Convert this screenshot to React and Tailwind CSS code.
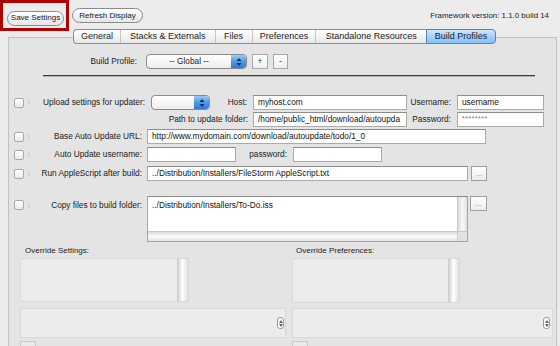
import React from "react";

const Check = () => (
  <div className="w-[10px] h-[10px] rounded-[2px] border border-[#a9a9a9] bg-gradient-to-b from-white to-[#e9e9e9]" />
);

const Gutter = ({ box = true }) => (
  <div className="w-[30px] h-[10px] flex items-center shrink-0">
    {box && (
      <>
        <div className="ml-[5px]">
          <Check />
        </div>
        <span className="ml-[4px] text-[7px] leading-none text-[#b8b8b8]">i</span>
      </>
    )}
  </div>
);

const Field = ({ className, children, muted }) => (
  <div
    className={`h-[15px] shrink-0 border border-[#ababab] border-t-[#8c8c8c] bg-white flex items-center px-[4px] whitespace-nowrap overflow-hidden ${
      muted ? "text-[#777] text-[7px] tracking-[0.5px]" : "text-[#111] text-[8.3px]"
    } ${className}`}
  >
    {children}
  </div>
);

const Dots = ({ className }) => (
  <div
    className={`h-[15px] shrink-0 border border-[#9f9f9f] bg-gradient-to-b from-white to-[#ececec] flex items-center justify-center text-[7px] text-[#777] leading-none ${className}`}
  >
    ...
  </div>
);

const Stepper = () => (
  <div className="w-[15px] h-full rounded-r-[3px] bg-gradient-to-b from-[#9ccbf5] via-[#4f9ae6] to-[#2f7ad4] flex items-center justify-center">
    <svg width="6" height="10" viewBox="0 0 6 10">
      <path d="M3 1 L5.5 4 L0.5 4 Z" fill="#10305a" />
      <path d="M3 9 L5.5 6 L0.5 6 Z" fill="#10305a" />
    </svg>
  </div>
);

const Popup = ({ className, children }) => (
  <div
    className={`h-[15px] shrink-0 rounded-[4px] border border-[#8a8a8a] bg-gradient-to-b from-white to-[#ededed] flex items-stretch overflow-hidden ${className}`}
  >
    <div className="flex-1 flex items-center justify-center text-[8.3px] text-[#222]">{children}</div>
    <Stepper />
  </div>
);

const MiniSpin = () => (
  <div className="w-[7px] h-[12px] rounded-[3px] border border-[#9a9a9a] bg-white flex flex-col items-center justify-center gap-[1px]">
    <svg width="4" height="3" viewBox="0 0 4 3">
      <path d="M2 0 L4 3 L0 3 Z" fill="#666" />
    </svg>
    <svg width="4" height="3" viewBox="0 0 4 3">
      <path d="M2 3 L4 0 L0 0 Z" fill="#666" />
    </svg>
  </div>
);

const tabs = [
  { name: "General", w: "w-[46px]" },
  { name: "Stacks & Externals", w: "w-[95px]" },
  { name: "Files", w: "w-[37px]" },
  { name: "Preferences", w: "w-[64px]" },
  { name: "Standalone Resources", w: "w-[111px]" },
];

export default function App() {
  return (
    <div className="w-[560px] h-[346px] overflow-hidden bg-[#ececec] font-['Liberation_Sans',Arial,sans-serif] text-[#1e1e1e]">
      {/* top bar */}
      <div className="h-[29px] flex items-start">
        <div className="w-[69px] h-[31px] shrink-0 border-[3px] border-[#b00000] relative z-20">
          <button className="ml-[4px] mt-[5px] w-[57px] h-[15px] rounded-full border border-[#8b8b8b] bg-gradient-to-b from-white to-[#e6e6e6] text-[8px] font-medium text-[#1a1a1a] leading-none">
            Save Settings
          </button>
        </div>
        <button className="ml-[3px] mt-[8px] w-[71px] h-[15px] rounded-full border border-[#8b8b8b] bg-gradient-to-b from-white to-[#e6e6e6] text-[8px] font-medium text-[#1a1a1a] leading-none">
          Refresh Display
        </button>
        <div className="ml-auto mr-[11px] mt-[11px] text-[7.9px] leading-[10px] text-[#222]">
          Framework version: 1.1.0 build 14
        </div>
      </div>

      {/* tabs */}
      <div className="relative z-10 ml-[73px] flex h-[15px] w-[423px]">
        <div className="flex h-[15px] border border-[#8e8e8e] border-r-0 rounded-l-[4px] overflow-hidden bg-gradient-to-b from-white to-[#e7e7e7]">
          {tabs.map((t, i) => (
            <div
              key={t.name}
              className={`${t.w} h-full flex items-center justify-center text-[9px] text-[#1e1e1e] leading-none ${
                i > 0 ? "border-l border-[#c4c4c4]" : ""
              }`}
            >
              {t.name}
            </div>
          ))}
        </div>
        <div className="w-[70px] h-[15px] rounded-r-[4px] border border-[#4f84c6] bg-gradient-to-b from-[#d3e8fb] via-[#a6d0f6] to-[#86c0f4] flex items-center justify-center text-[9px] text-[#10233d] leading-none">
          Build Profiles
        </div>
      </div>

      {/* panel */}
      <div className="-mt-[7px] ml-[8px] w-[549px] h-[309px] overflow-hidden border-l border-t border-r border-[#c2c2c2] bg-[#e4e4e4]">
        {/* build profile */}
        <div className="mt-[16px] flex items-center h-[15px]">
          <div className="w-[128px] text-right text-[8.3px] text-[#222]">Build Profile:</div>
          <Popup className="ml-[9px] w-[101px]">-- Global --</Popup>
          <div className="ml-[5px] w-[16px] h-[15px] border border-[#a8a8a8] bg-gradient-to-b from-white to-[#efefef] flex items-center justify-center text-[9px] text-[#444] leading-none">
            +
          </div>
          <div className="ml-[5px] w-[15px] h-[15px] border border-[#a8a8a8] bg-gradient-to-b from-white to-[#efefef] flex items-center justify-center text-[9px] text-[#444] leading-none">
            -
          </div>
        </div>

        <div className="mt-[6px] ml-[34px] w-[492px] h-px bg-[#3a3a3a]" />
        <div className="ml-[34px] w-[492px] h-px bg-[#b4b4b4]" />

        {/* row 1 */}
        <div className="mt-[18px] flex items-center h-[15px] text-[8.3px] text-[#222]">
          <Gutter />
          <div className="w-[106px] text-right">Upload settings for updater:</div>
          <Popup className="ml-[6px] w-[59px]" />
          <div className="w-[37px] text-right">Host:</div>
          <Field className="ml-[6px] w-[154px]">myhost.com</Field>
          <div className="w-[44px] text-right">Username:</div>
          <Field className="ml-[6px] w-[87px]">username</Field>
        </div>

        {/* row 2 */}
        <div className="mt-[2px] flex items-center h-[15px] text-[8.3px] text-[#222]">
          <div className="w-[239px] text-right">Path to update folder:</div>
          <Field className="ml-[5px] w-[154px]">/home/public_html/download/autoupda</Field>
          <div className="w-[44px] text-right">Password:</div>
          <Field className="ml-[6px] w-[87px]" muted>
            ********
          </Field>
        </div>

        {/* row 3 */}
        <div className="mt-[2px] flex items-center h-[15px] text-[8.3px] text-[#222]">
          <Gutter />
          <div className="w-[103px] text-right">Base Auto Update URL:</div>
          <Field className="ml-[5px] w-[339px]">http://www.mydomain.com/download/autoupdate/todo/1_0</Field>
        </div>

        {/* row 4 */}
        <div className="mt-[3px] flex items-center h-[15px] text-[8.3px] text-[#222]">
          <Gutter />
          <div className="w-[103px] text-right">Auto Update username:</div>
          <Field className="ml-[5px] w-[89px]" />
          <div className="w-[51px] text-right">password:</div>
          <Field className="ml-[6px] w-[89px]" />
        </div>

        {/* row 5 */}
        <div className="mt-[4px] flex items-center h-[15px] text-[8.3px] text-[#222]">
          <Gutter />
          <div className="w-[103px] text-right">Run AppleScript after build:</div>
          <Field className="ml-[5px] w-[321px]">../Distribution/Installers/FileStorm AppleScript.txt</Field>
          <Dots className="ml-[3px] w-[16px]" />
        </div>

        {/* row 6 */}
        <div className="mt-[15px] flex items-start h-[46px] text-[8.3px] text-[#222]">
          <div className="mt-[4px]">
            <Gutter />
          </div>
          <div className="mt-[3px] w-[103px] text-right">Copy files to build folder:</div>
          <div className="ml-[5px] w-[321px] h-[46px] flex flex-col border border-[#a5a5a5] border-t-[#8c8c8c]">
            <div className="flex h-[34px]">
              <div className="flex-1 bg-white px-[4px] pt-[3px] text-[#111] leading-[10px]">
                ../Distribution/Installers/To-Do.iss
              </div>
              <div className="w-[10px] bg-gradient-to-r from-[#d9d9d9] via-[#f7f7f7] to-[#e2e2e2] border-l border-[#c8c8c8]" />
            </div>
            <div className="flex h-[10px] border-t border-[#c8c8c8]">
              <div className="flex-1 bg-gradient-to-b from-[#dcdcdc] via-[#fafafa] to-[#e4e4e4]" />
              <div className="w-[10px] bg-[#e2e2e2] border-l border-[#cfcfcf]" />
            </div>
          </div>
          <Dots className="ml-[2px] w-[17px]" />
        </div>

        {/* override labels */}
        <div className="mt-[4px] flex h-[10px] items-center text-[8px] text-[#222] leading-none">
          <div className="ml-[16px] w-[271px]">Override Settings:</div>
          <div>Override Preferences:</div>
        </div>

        {/* override boxes */}
        <div className="mt-[2px] flex h-[44px]">
          <div className="ml-[11px] w-[169px] h-[44px] flex border border-[#d8d8d8] bg-[#ebebeb]">
            <div className="flex-1" />
            <div className="w-[11px] bg-gradient-to-r from-[#c9c9c9] via-white to-[#dedede]" />
          </div>
          <div className="ml-[103px] w-[168px] h-[45px] flex border border-[#d8d8d8] bg-[#ebebeb]">
            <div className="flex-1" />
            <div className="w-[11px] bg-gradient-to-r from-[#c9c9c9] via-white to-[#dedede]" />
          </div>
        </div>

        {/* lower boxes */}
        <div className="mt-[6px] flex h-[30px]">
          <div className="ml-[11px] w-[266px] h-[30px] flex items-center justify-end pr-[1px] border border-[#d8d8d8] bg-[#ececec]">
            <MiniSpin />
          </div>
          <div className="ml-[6px] w-[261px] h-[30px] flex items-center justify-end pr-[2px] border border-[#d8d8d8] bg-[#ececec]">
            <MiniSpin />
          </div>
        </div>

        {/* bottom partial */}
        <div className="mt-[3px] flex">
          <div className="ml-[11px] w-[16px] h-[10px] border border-[#c8c8c8] bg-[#e9e9e9]" />
          <div className="ml-[256px] w-[16px] h-[10px] border border-[#c8c8c8] bg-[#e9e9e9]" />
        </div>
      </div>
    </div>
  );
}
